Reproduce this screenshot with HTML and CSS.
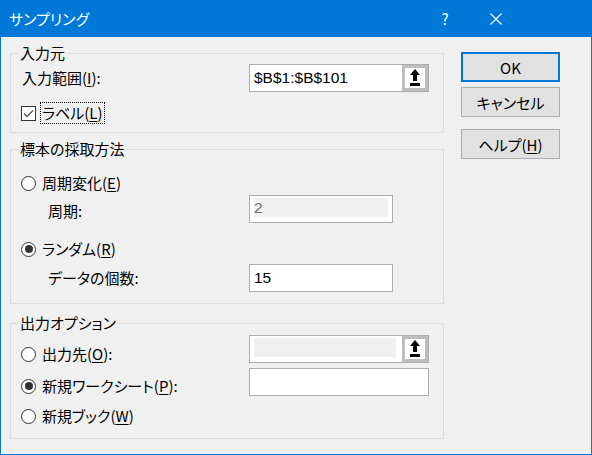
FILE: index.html
```html
<!DOCTYPE html>
<html lang="ja">
<head>
<meta charset="utf-8">
<title>サンプリング</title>
<link rel="stylesheet" href="styles.css">
</head>
<body>
<div class="window">
  <div class="titlebar">
    <span class="title">サンプリング</span>
    <span class="help">?</span>
    <svg class="close" width="12" height="12" viewBox="0 0 12 12"><path d="M0.5 0.5 L11.5 11.5 M11.5 0.5 L0.5 11.5" stroke="#fff" stroke-width="1.1" fill="none"/></svg>
  </div>
  <div class="content">
    <div class="groups">
      <fieldset class="group g1">
        <legend>入力元</legend>
        <div class="row in-row">
          <span class="lbl">入力範囲(<u>I</u>):</span>
          <div class="field ref">
            <span class="val">$B$1:$B$101</span>
            <span class="refbtn"><svg width="20" height="20" viewBox="0 0 20 20"><polygon points="10,1 15,7 5,7" fill="#000"/><rect x="8" y="6" width="4" height="7" fill="#000"/><rect x="5" y="15" width="10" height="3" fill="#000"/></svg></span>
          </div>
        </div>
        <div class="row chk-row">
          <span class="check"><svg width="13" height="13" viewBox="0 0 13 13"><path d="M2 6.5 L5 9.5 L11 3.5" stroke="#555" stroke-width="1.3" fill="none"/></svg></span>
          <span class="focus">ラベル(<u>L</u>)</span>
        </div>
      </fieldset>

      <fieldset class="group g2">
        <legend>標本の採取方法</legend>
        <div class="row radio-row r-periodic">
          <span class="radio"></span><span class="rtext">周期変化(<u>E</u>)</span>
        </div>
        <div class="row sub-row s-period">
          <span class="lbl">周期:</span>
          <div class="field small disabled"><span class="inner"><span class="val dis">2</span></span></div>
        </div>
        <div class="row radio-row r-random">
          <span class="radio on"></span><span class="rtext">ランダム(<u>R</u>)</span>
        </div>
        <div class="row sub-row s-count">
          <span class="lbl">データの個数:</span>
          <div class="field small"><span class="val">15</span></div>
        </div>
      </fieldset>

      <fieldset class="group g3">
        <legend>出力オプション</legend>
        <div class="row out-row o-dest">
          <span class="radio-wrap"><span class="radio"></span><span class="rtext">出力先(<u>O</u>):</span></span>
          <div class="field ref disabled">
            <span class="inner wide"></span>
            <span class="refbtn"><svg width="20" height="20" viewBox="0 0 20 20"><polygon points="10,1 15,7 5,7" fill="#000"/><rect x="8" y="6" width="4" height="7" fill="#000"/><rect x="5" y="15" width="10" height="3" fill="#000"/></svg></span>
          </div>
        </div>
        <div class="row out-row o-sheet">
          <span class="radio-wrap"><span class="radio on"></span><span class="rtext">新規ワークシート(<u>P</u>):</span></span>
          <div class="field plain"></div>
        </div>
        <div class="row radio-row o-book">
          <span class="radio"></span><span class="rtext">新規ブック(<u>W</u>)</span>
        </div>
      </fieldset>
    </div>

    <div class="buttons">
      <button class="btn default">OK</button>
      <button class="btn cancel">キャンセル</button>
      <button class="btn helpbtn">ヘルプ(<u>H</u>)</button>
    </div>
  </div>
</div>
</body>
</html>
```

FILE: styles.css
```css
* { box-sizing: border-box; }
html, body { margin: 0; padding: 0; }
body {
  width: 592px;
  height: 455px;
  overflow: hidden;
  background: #f0f0f0;
  font-family: "Noto Sans CJK JP", sans-serif;
  font-size: 15px;
  line-height: 20px;
  color: #000;
  font-feature-settings: "palt";
}
u { text-decoration-thickness: 1px; text-underline-offset: 2px; }

.window {
  width: 592px;
  height: 455px;
  border: 1px solid #0078d7;
  border-top: 0;
  background: #f0f0f0;
  display: flex;
  flex-direction: column;
}

.titlebar {
  height: 37px;
  flex: none;
  background: #0078d7;
  color: #fff;
  display: flex;
  align-items: center;
  padding-left: 8px;
}
.title { flex: 1; }
.help { width: 10px; text-align: center; margin-right: 40px; }
.close { margin-right: 89px; display: block; }

.content {
  display: flex;
  padding: 6px 0 0 9px;
}
.groups { width: 434px; }

.group {
  margin: 0;
  padding: 0;
  border: 1px solid #dcdcdc;
  min-width: 0;
}
.group legend {
  margin-left: 7px;
  padding: 0 2px;
  line-height: 20px;
  height: 20px;
}
.g2 { margin-top: 6px; }
.g3 { margin-top: 9px; }

.row { display: flex; align-items: center; }

/* group 1 */
.g1 { padding-bottom: 8px; }
.in-row { margin-top: 1px; height: 28px; padding-left: 11px; }
.in-row .lbl { width: 227px; }
.chk-row { margin-top: 10px; height: 22px; padding-left: 10px; }
.check {
  width: 15px; height: 15px;
  border: 1px solid #333;
  background: #fff;
  display: flex; align-items: center; justify-content: center;
}
.focus {
  margin-left: 4px;
  border: 1px dotted #000;
  padding: 0 1px;
  line-height: 20px;
}

/* fields */
.field {
  height: 28px;
  border: 1px solid #adadad;
  background: #fff;
  display: flex;
  align-items: center;
}
.val {
  font-family: "Liberation Sans", Arial, sans-serif;
  font-size: 15.5px;
  padding-left: 4px;
  flex: 1;
  font-feature-settings: normal;
}
.val.dis { color: #6d6d6d; padding-left: 0; }
.ref { width: 180px; }
.refbtn {
  width: 26px; height: 26px;
  border: 3px solid #bdbdbd;
  background: #fff;
  display: flex; align-items: center; justify-content: center;
  flex: none;
}
.small { width: 144px; }
.disabled { align-items: flex-start; }
.disabled .inner {
  display: flex;
  align-items: center;
  background: #f0f0f0;
  height: 19px;
  margin: 2px 4px 0 4px;
  flex: 1;
}
.ref.disabled .inner { margin-right: 6px; }
.ref.disabled .refbtn { align-self: center; }
.plain { width: 180px; }

/* radios */
.radio {
  width: 15px; height: 15px;
  border: 1px solid #333;
  border-radius: 50%;
  background: #fff;
  flex: none;
  display: flex; align-items: center; justify-content: center;
}
.radio.on::after {
  content: "";
  width: 8px; height: 8px;
  border-radius: 50%;
  background: #333;
}
.rtext { margin-left: 6px; }
.radio-row { height: 22px; padding-left: 10px; }
.radio-wrap { display: flex; align-items: center; width: 228px; height: 22px; }

/* group 2 */
.g2 { padding-bottom: 11px; }
.r-periodic { margin-top: 13px; }
.sub-row { height: 28px; padding-left: 37px; }
.sub-row .lbl { width: 201px; }
.s-period { margin-top: 1px; }
.s-period .lbl { padding-top: 4px; }
.r-random { margin-top: 15px; }
.s-count { margin-top: 4px; }

/* group 3 */
.g3 { padding-bottom: 11px; }
.out-row { height: 28px; padding-left: 10px; align-items: flex-start; }
.o-dest { margin-top: 2px; }
.o-dest .radio-wrap { margin-top: 8px; }
.o-sheet { margin-top: 5px; }
.o-sheet .radio-wrap { margin-top: 7px; }
.o-book { margin-top: 9px; }

/* buttons */
.buttons {
  margin-left: 17px;
  padding-top: 9px;
  display: flex;
  flex-direction: column;
}
.btn {
  width: 99px;
  height: 30px;
  background: #e1e1e1;
  border: 1px solid #adadad;
  font-family: "Noto Sans CJK JP", sans-serif;
  font-size: 15px;
  font-feature-settings: "palt";
  color: #000;
  padding: 0;
  margin: 0;
}
.btn.default { border: 2px solid #0078d7; }
.cancel { margin-top: 5px; }
.helpbtn { margin-top: 12px; }
```
